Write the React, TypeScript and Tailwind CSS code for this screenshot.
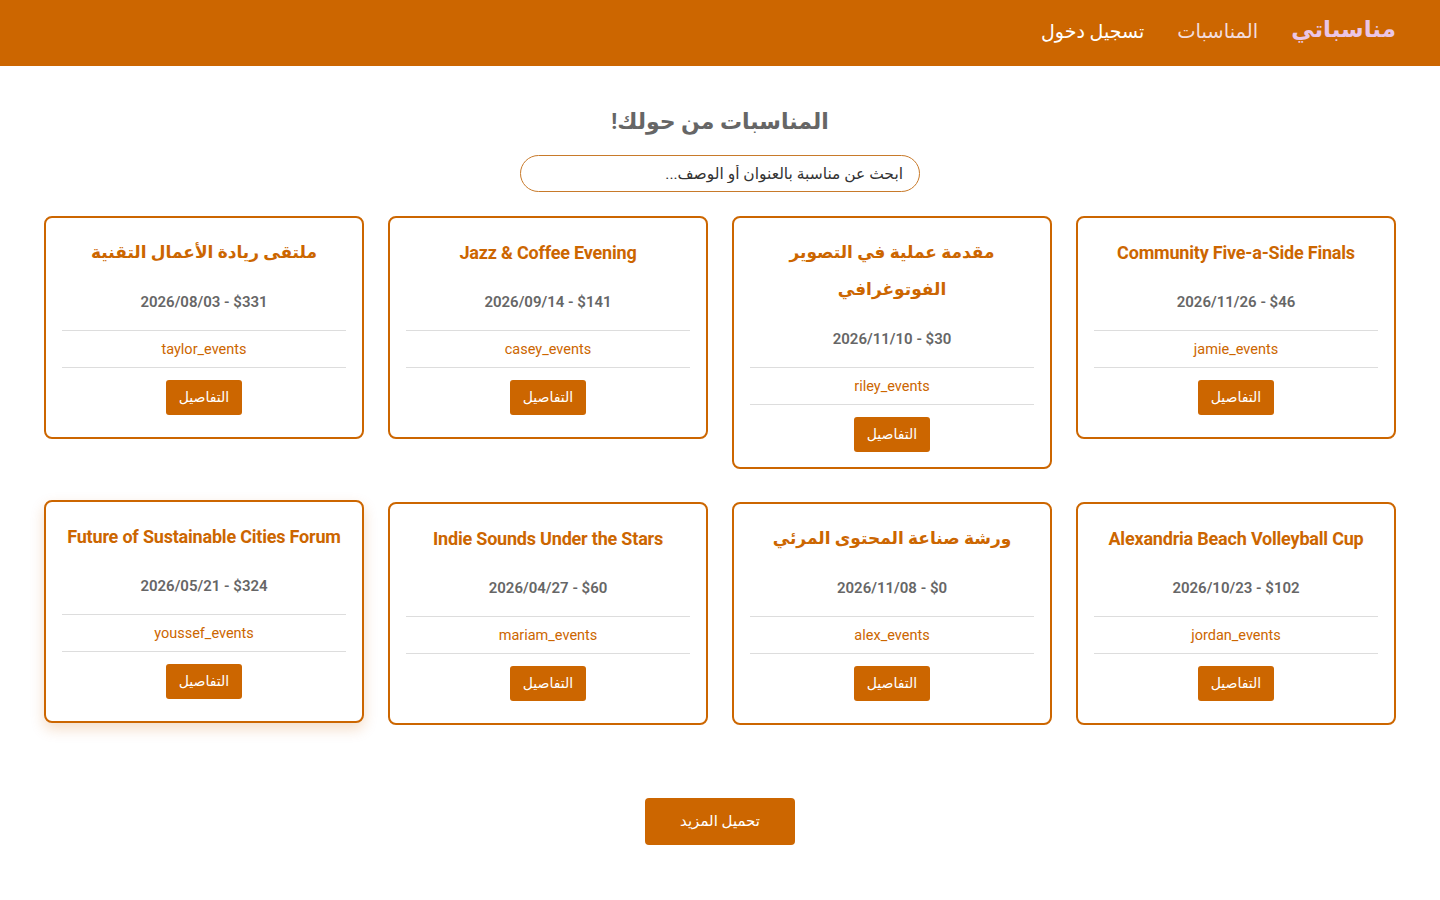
import React from 'react';

interface EventItem {
  title: string;
  date: string;
  price: number;
  organizer: string;
}

const events: EventItem[] = [
  { title: 'ملتقى ريادة الأعمال التقنية', date: '2026/08/03', price: 331, organizer: 'taylor_events' },
  { title: 'Jazz & Coffee Evening', date: '2026/09/14', price: 141, organizer: 'casey_events' },
  { title: 'مقدمة عملية في التصوير الفوتوغرافي', date: '2026/11/10', price: 30, organizer: 'riley_events' },
  { title: 'Community Five-a-Side Finals', date: '2026/11/26', price: 46, organizer: 'jamie_events' },
  { title: 'Future of Sustainable Cities Forum', date: '2026/05/21', price: 324, organizer: 'youssef_events' },
  { title: 'Indie Sounds Under the Stars', date: '2026/04/27', price: 60, organizer: 'mariam_events' },
  { title: 'ورشة صناعة المحتوى المرئي', date: '2026/11/08', price: 0, organizer: 'alex_events' },
  { title: 'Alexandria Beach Volleyball Cup', date: '2026/10/23', price: 102, organizer: 'jordan_events' },
];

const isArabic = (s: string) => /[\u0600-\u06FF]/.test(s);

function EventCard({ event, hovered }: { event: EventItem; hovered?: boolean }) {
  return (
    <div
      dir="rtl"
      className={
        'flex min-h-[223px] flex-col items-center rounded-lg border-2 border-[#cc6600] bg-white px-4 pt-4 pb-[15px] text-center ' +
        (hovered ? '-translate-y-0.5 shadow-[0_6px_14px_rgba(204,102,0,0.22)]' : '')
      }
    >
      <h3
        className={
          'font-bold leading-[37px] text-[#cc6600] ' +
          (isArabic(event.title) ? 'text-[17px]' : 'text-[18px] tracking-[-0.2px]')
        }
      >
        {event.title}
      </h3>
      <p dir="ltr" className="mt-[19px] mb-4 text-[15px] font-semibold leading-6 text-[#666]">
        {event.date} - ${event.price}
      </p>
      <div className="w-full border-y border-[#dddddd] pt-[9px] pb-[7px] text-[14.5px] leading-[20px] text-[#cc6600]">
        {event.organizer}
      </div>
      <button className="mt-3 h-[35px] w-[76px] rounded-[3px] bg-[#cc6600] text-[14px] text-white">
        التفاصيل
      </button>
    </div>
  );
}

export default function App() {
  return (
    <div dir="rtl" className="min-h-screen bg-white font-['Roboto','DejaVu_Sans',sans-serif]">
      <header className="flex h-[66px] items-center bg-[#cc6600] px-[44px]">
        <span className="pb-[6px] text-[23px] font-bold text-[#eac6e6]">مناسباتي</span>
        <a className="mr-[33px] pb-[2px] text-[19.5px] text-[#f3dcdc]">المناسبات</a>
        <a className="mr-[33px] pb-[2px] text-[19px] text-white">تسجيل دخول</a>
      </header>

      <main className="px-[44px] pt-[40px] pb-[54px]">
        <h1 className="text-center text-[22px] font-bold leading-8 text-[#666]">المناسبات من حولك!</h1>
        <div className="mt-[17px] flex justify-center">
          <input
            type="text"
            placeholder="ابحث عن مناسبة بالعنوان أو الوصف..."
            className="h-[37px] w-[400px] rounded-full border border-[#c87a2a] px-4 text-[15.5px] text-[#333] outline-none placeholder:text-[#333]"
          />
        </div>

        <div dir="ltr" className="mt-[24px] grid grid-cols-4 items-start gap-x-6 gap-y-[33px]">
          {events.map((e, i) => (
            <EventCard key={i} event={e} hovered={i === 4} />
          ))}
        </div>

        <div className="mt-[73px] flex justify-center">
          <button className="h-[47px] w-[150px] rounded bg-[#cc6600] text-[15px] text-white">تحميل المزيد</button>
        </div>
      </main>
    </div>
  );
}
